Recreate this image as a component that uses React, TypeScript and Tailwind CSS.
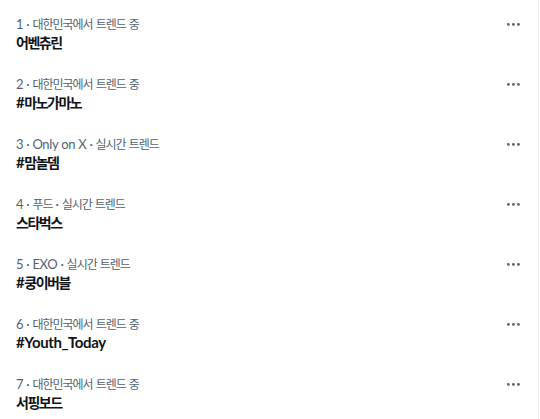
import React from 'react';

type Trend = {
  rank: number;
  context: string;
  title: string;
};

const trends: Trend[] = [
  { rank: 1, context: '대한민국에서 트렌드 중', title: '어벤츄린' },
  { rank: 2, context: '대한민국에서 트렌드 중', title: '#마노가마노' },
  { rank: 3, context: 'Only on X · 실시간 트렌드', title: '#맘놀뎀' },
  { rank: 4, context: '푸드 · 실시간 트렌드', title: '스타벅스' },
  { rank: 5, context: 'EXO · 실시간 트렌드', title: '#쿵이버블' },
  { rank: 6, context: '대한민국에서 트렌드 중', title: '#Youth_Today' },
  { rank: 7, context: '대한민국에서 트렌드 중', title: '서핑보드' },
];

// Hangul runs are set a bit smaller and tighter so the CJK font sits closer to the original width
const Mixed: React.FC<{ text: string; hangul: string }> = ({ text, hangul }) => (
  <>
    {text.split(/([\uAC00-\uD7A3]+)/).map((part, i) =>
      /[\uAC00-\uD7A3]/.test(part) ? (
        <span key={i} className={hangul}>
          {part}
        </span>
      ) : (
        <span key={i}>{part}</span>
      )
    )}
  </>
);

const MoreIcon = () => (
  <svg width="13" height="3" viewBox="0 0 13 3" className="mt-[7px] shrink-0 text-[#536471]" fill="currentColor">
    <circle cx="1.4" cy="1.4" r="1.4" />
    <circle cx="6.4" cy="1.4" r="1.4" />
    <circle cx="11.4" cy="1.4" r="1.4" />
  </svg>
);

const TrendRow: React.FC<{ trend: Trend }> = ({ trend }) => (
  <div className="flex h-[60px] items-start justify-between pl-4 pr-[18px] pt-3">
    <div className="flex flex-col">
      <span className="h-4 text-[13px] leading-4 tracking-[-0.3px] text-[#536471] whitespace-nowrap">
        <Mixed text={`${trend.rank} · ${trend.context}`} hangul="text-[12px] tracking-[-1px]" />
      </span>
      <span className="h-5 text-[15px] leading-5 tracking-[-0.4px] font-bold text-[#0f1419] whitespace-nowrap">
        <Mixed text={trend.title} hangul="text-[14px] tracking-[-1.5px]" />
      </span>
    </div>
    <MoreIcon />
  </div>
);

const App: React.FC = () => {
  return (
    <div className="min-h-screen bg-white" style={{ fontFamily: 'Lato, "Noto Sans CJK KR", sans-serif' }}>
      <div className="w-[539px] min-h-screen border-r border-[#eff3f4] pt-1">
        {trends.map((t) => (
          <TrendRow key={t.rank} trend={t} />
        ))}
      </div>
    </div>
  );
};

export default App;
